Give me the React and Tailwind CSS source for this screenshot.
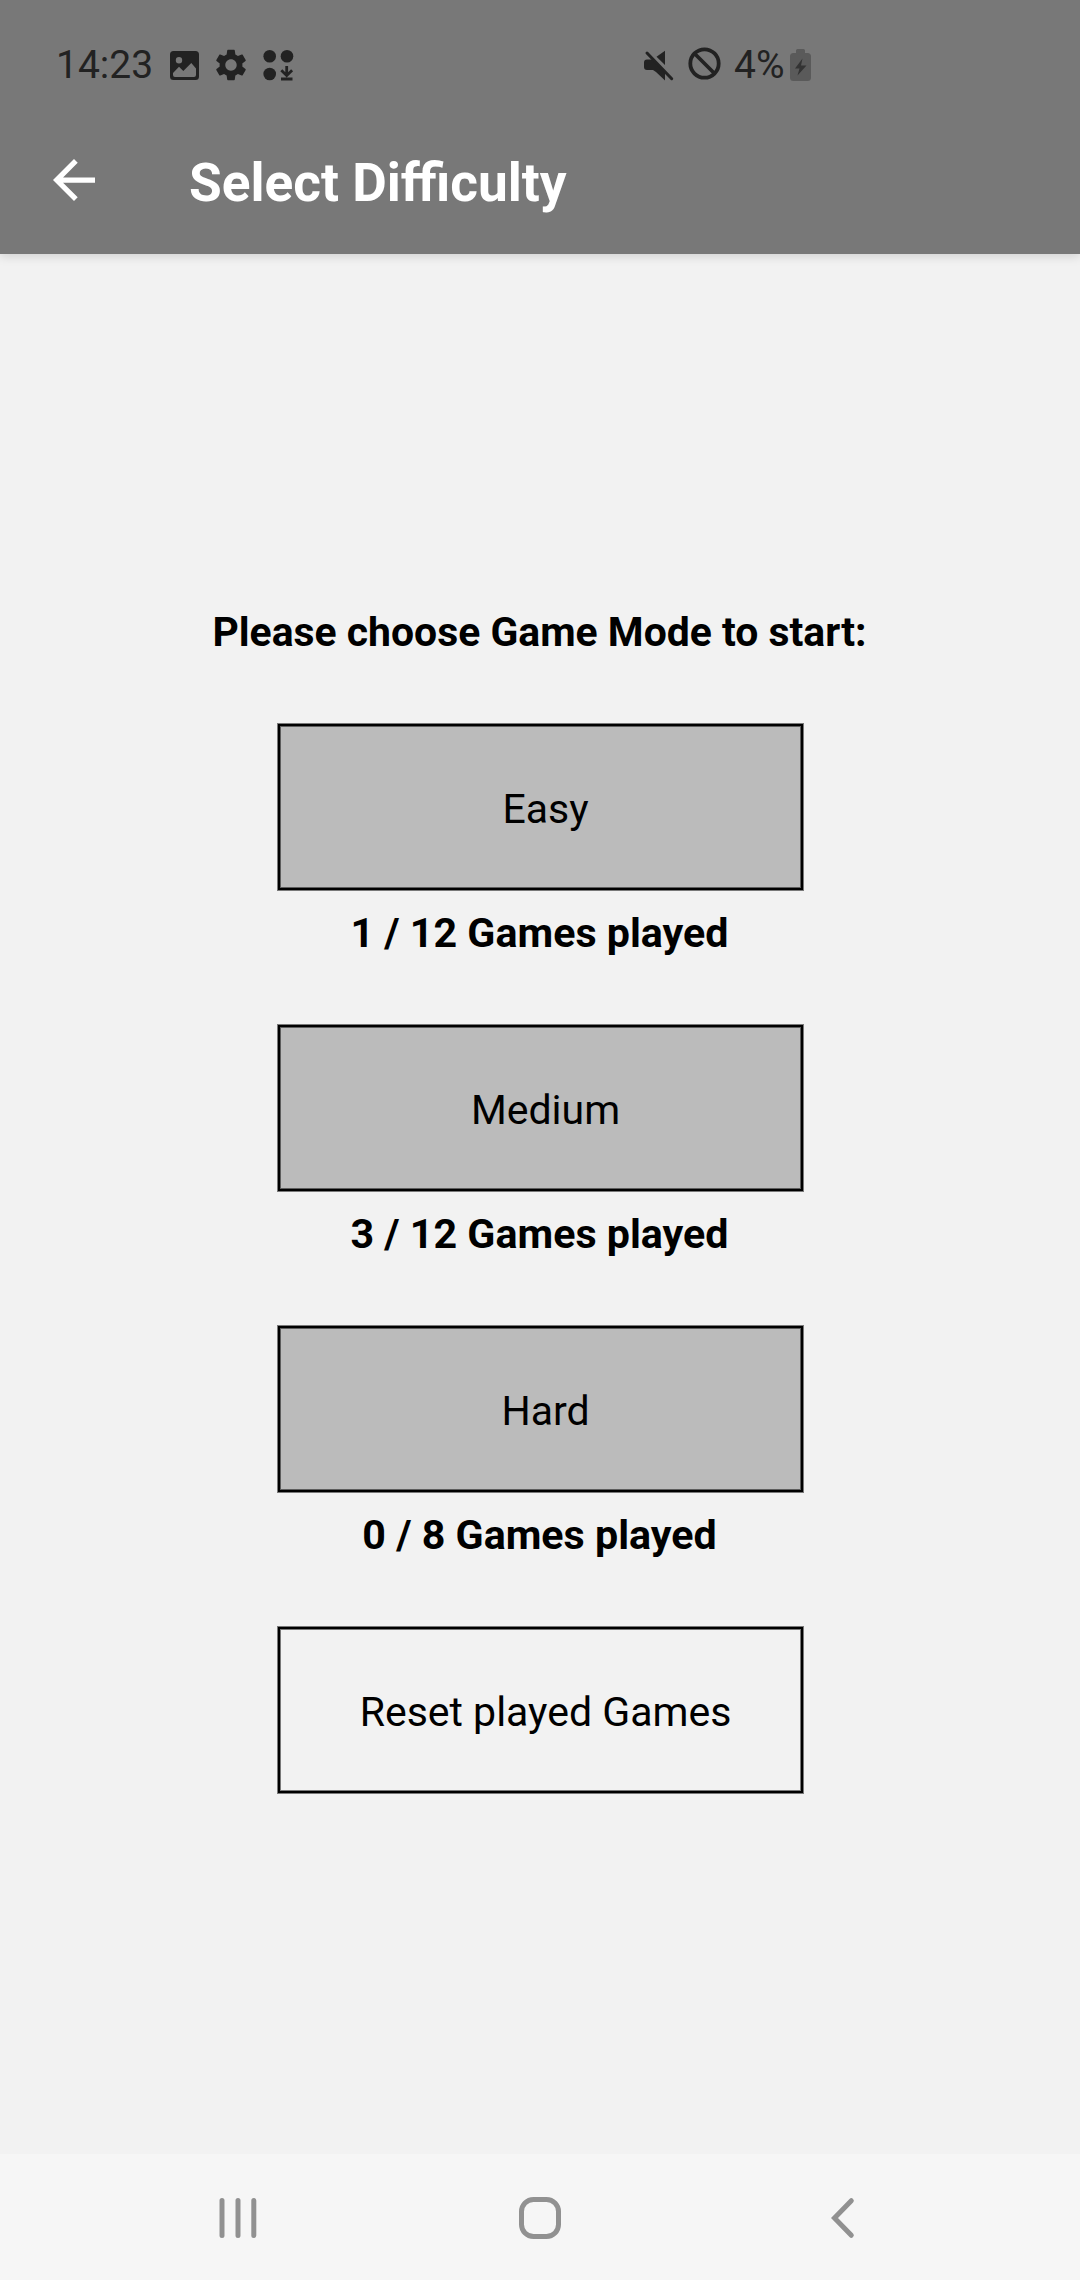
const INK = "#222222";

function StatusBar() {
  return (
    <div className="flex h-[108px] items-start justify-between pt-[42px] text-[39px] leading-[44px] text-[#222222]">
      <div className="flex pl-[56px]">
        <span className="w-[114px] pt-px">14:23</span>
        <svg className="mt-[9px] h-[29px] w-[29px]" viewBox="0 0 29 29" fill={INK}>
          <path
            fillRule="evenodd"
            d="M3.5 0h22A3.5 3.5 0 0 1 29 3.5v22a3.5 3.5 0 0 1-3.5 3.5h-22A3.5 3.5 0 0 1 0 25.5v-22A3.5 3.5 0 0 1 3.5 0zM9 6a3.200 3.200 0 1 0 0 6.400A3.200 3.200 0 0 0 9 6zM3 22v2a2 2 0 0 0 2 2h19a2 2 0 0 0 2-2v-6.500L21.300 12l-8 8L9 15.800z"
          />
        </svg>
        <svg className="mt-[4px] ml-[13px] h-[38px] w-[38px]" viewBox="0 0 24 24" fill={INK}>
          <path d="M19.140 12.940c.040-.300.060-.610.060-.940 0-.320-.020-.640-.070-.940l2.030-1.580c.180-.140.230-.410.120-.610l-1.920-3.320c-.120-.220-.370-.290-.590-.220l-2.390.960c-.500-.380-1.030-.700-1.620-.940l-.360-2.540c-.040-.240-.240-.410-.480-.410h-3.840c-.240 0-.430.170-.470.410l-.360 2.540c-.590.240-1.130.570-1.620.940l-2.390-.960c-.220-.080-.470 0-.590.220L2.740 8.870c-.120.210-.080.470.120.610l2.030 1.580c-.050.300-.090.630-.090.940s.020.640.070.940l-2.030 1.580c-.180.140-.230.410-.120.610l1.920 3.320c.120.220.370.290.590.220l2.390-.960c.500.380 1.030.700 1.620.940l.360 2.540c.050.240.240.410.480.410h3.840c.240 0 .440-.170.470-.410l.360-2.540c.590-.240 1.130-.560 1.620-.940l2.390.960c.220.080.470 0 .590-.220l1.920-3.320c.120-.220.070-.470-.120-.610l-2.010-1.580zM12 15.600c-1.980 0-3.600-1.620-3.600-3.600s1.620-3.600 3.600-3.600 3.600 1.620 3.600 3.600-1.620 3.600-3.600 3.600z" />
        </svg>
        <svg className="mt-[8px] ml-[13px] h-[31px] w-[31px]" viewBox="0 0 31 31" fill={INK}>
          <circle cx="6.700" cy="6.300" r="6.300" />
          <circle cx="24" cy="6.300" r="6.300" />
          <circle cx="6.700" cy="24" r="6.300" />
          <path
            d="M23.700 16v9.500M18.300 20.300l5.400 5.200 5.400-5.200M18 29h11.500"
            fill="none"
            stroke={INK}
            strokeWidth="2.800"
          />
        </svg>
      </div>
      <div className="flex pr-[269px]">
        <svg className="mt-[8px] h-[31px] w-[30px]" viewBox="0 0 30 31" fill={INK}>
          <path d="M21 .7V15l-8.500-8.200zM3 9.500h6L21 22v8.500L12 22l-3-2H3a3 3 0 0 1-3-3v-4.500a3 3 0 0 1 3-3z" />
          <path d="M3 3l24.700 25.700" fill="none" stroke={INK} strokeWidth="3" strokeLinecap="round" />
        </svg>
        <svg className="mt-[5px] ml-[14px] h-[33px] w-[33px]" viewBox="0 0 33 33" fill="none" stroke={INK} strokeWidth="3.800">
          <circle cx="16.500" cy="16.500" r="14.200" />
          <path d="M6.500 6.500l20 20" />
        </svg>
        <span className="ml-[13px] w-[56px] pt-px">4%</span>
        <svg className="mt-[7px] h-[33px] w-[21px]" viewBox="0 0 21 33">
          <path
            d="M7.500 0h6a1.500 1.500 0 0 1 1.500 1.500V4h2.500A3.500 3.500 0 0 1 21 7.500v21a3.500 3.500 0 0 1-3.500 3.500h-14A3.500 3.500 0 0 1 0 28.500v-21A3.500 3.500 0 0 1 3.500 4H6V1.500A1.500 1.500 0 0 1 7.500 0z"
            fill="#5a5a5a"
          />
          <path d="M12.500 9.500L5 19.500h4.500L7.500 26.500 16.500 16.500H11z" fill="#333333" />
        </svg>
      </div>
    </div>
  );
}

function Header() {
  return (
    <header className="h-[254px] bg-[#787878] shadow-[0_2px_10px_rgba(0,0,0,0.15)]">
      <StatusBar />
      <div className="flex items-start pt-[45px] pl-[53px] text-white">
        <svg className="mt-[6px] h-[42px] w-[42px]" viewBox="4 4 16 16" fill="currentColor" aria-label="Back">
          <path d="M20 11H7.830l5.590-5.590L12 4l-8 8 8 8 1.410-1.410L7.830 13H20z" />
        </svg>
        <h1 className="ml-[94px] text-[53.2px] leading-[60px] font-bold">Select Difficulty</h1>
      </div>
    </header>
  );
}

function ModeButton({ label, outlined }) {
  return (
    <button
      className={
        "flex h-[166px] w-[525px] items-center justify-center border-2 border-black pt-1 pl-[10px] leading-[50px] shadow-[0_0_0_1px_rgba(0,0,0,0.5),inset_0_0_0_1px_rgba(0,0,0,0.5)] " +
        (outlined ? "bg-transparent" : "bg-[#bbbbbb]")
      }
    >
      {label}
    </button>
  );
}

const MODES = [
  { label: "Easy", played: "1 / 12 Games played" },
  { label: "Medium", played: "3 / 12 Games played" },
  { label: "Hard", played: "0 / 8 Games played" },
];

export default function App() {
  return (
    <div className="flex h-[2280px] w-[1080px] flex-col bg-[#f2f2f2] font-['Roboto',sans-serif] text-black">
      <Header />
      <main className="flex flex-1 flex-col items-center pt-[353px] pl-px text-[41px]">
        <p className="h-[117px] pr-[2px] text-[40.9px] leading-[50px] font-bold">Please choose Game Mode to start:</p>
        {MODES.map((mode) => (
          <section key={mode.label} className="flex h-[301px] flex-col items-center">
            <ModeButton label={mode.label} />
            <p className="mt-[18px] pr-[2px] text-[41.2px] leading-[50px] font-bold">{mode.played}</p>
          </section>
        ))}
        <ModeButton label="Reset played Games" outlined />
      </main>
      <nav className="flex h-[126px] items-center justify-between bg-[#f6f6f6] px-[218px] pt-[2px]">
        <svg className="h-[42px] w-[44px]" viewBox="0 0 44 42" fill="none" stroke="#919191" strokeWidth="5" strokeLinecap="round">
          <path d="M4 3.500v35M20 3.500v35M35.800 3.500v35" />
        </svg>
        <svg className="h-[42px] w-[42px]" viewBox="0 0 42 42" fill="none" stroke="#919191" strokeWidth="5">
          <rect x="2.500" y="2.500" width="37" height="37" rx="12" />
        </svg>
        <svg className="h-[42px] w-[44px]" viewBox="-12 0 44 42" fill="none" stroke="#919191" strokeWidth="5" strokeLinecap="round">
          <path d="M21.300 3.700L4.500 21l16.800 17.300" />
        </svg>
      </nav>
    </div>
  );
}
